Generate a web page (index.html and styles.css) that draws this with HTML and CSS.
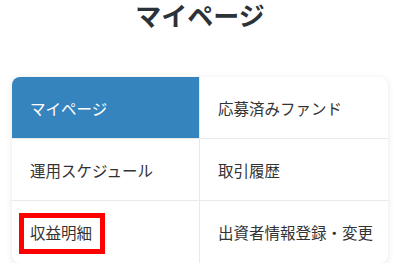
FILE: index.html
```html
<!DOCTYPE html>
<html lang="ja">
<head>
<meta charset="utf-8">
<title>マイページ</title>
<link rel="stylesheet" href="styles.css">
</head>
<body>
<div class="page">
  <h1 class="title">マイページ</h1>
  <nav class="menu">
    <a class="cell cell-left cell-active">マイページ</a>
    <a class="cell">応募済みファンド</a>
    <a class="cell cell-left">運用スケジュール</a>
    <a class="cell">取引履歴</a>
    <a class="cell cell-left cell-last"><span class="highlight">収益明細</span></a>
    <a class="cell cell-last">出資者情報登録・変更</a>
  </nav>
</div>
</body>
</html>
```

FILE: styles.css
```css
html, body {
  margin: 0;
  padding: 0;
  background: #ffffff;
}
body {
  font-family: "Noto Sans CJK JP", "Noto Sans", sans-serif;
  color: #333333;
}
.page {
  padding: 0 12px;
}
.title {
  margin: 0;
  font-size: 26px;
  line-height: 30px;
  font-weight: 700;
  text-align: center;
  color: #2b3238;
}
.menu {
  margin-top: 47px;
  display: grid;
  grid-template-columns: 1fr 1fr;
  border-radius: 8px;
  overflow: hidden;
  background: #ffffff;
  box-shadow: 0 1px 6px rgba(0, 0, 0, 0.10);
}
.cell {
  box-sizing: border-box;
  height: 62px;
  display: flex;
  align-items: center;
  padding-left: 18px;
  font-size: 15.5px;
  line-height: 24px;
  color: #333333;
  text-decoration: none;
  border-bottom: 1px solid #e9e9e9;
}
.cell-left {
  border-right: 1px solid #e9e9e9;
}
.cell-last {
  border-bottom: none;
  height: 62px;
}
.cell-active {
  background: #3584bd;
  color: #ffffff;
}
.highlight {
  position: relative;
}
.highlight::after {
  content: "";
  position: absolute;
  left: -11px;
  right: -13px;
  top: -7px;
  bottom: -10px;
  border: 5px solid #ff0000;
}
```
